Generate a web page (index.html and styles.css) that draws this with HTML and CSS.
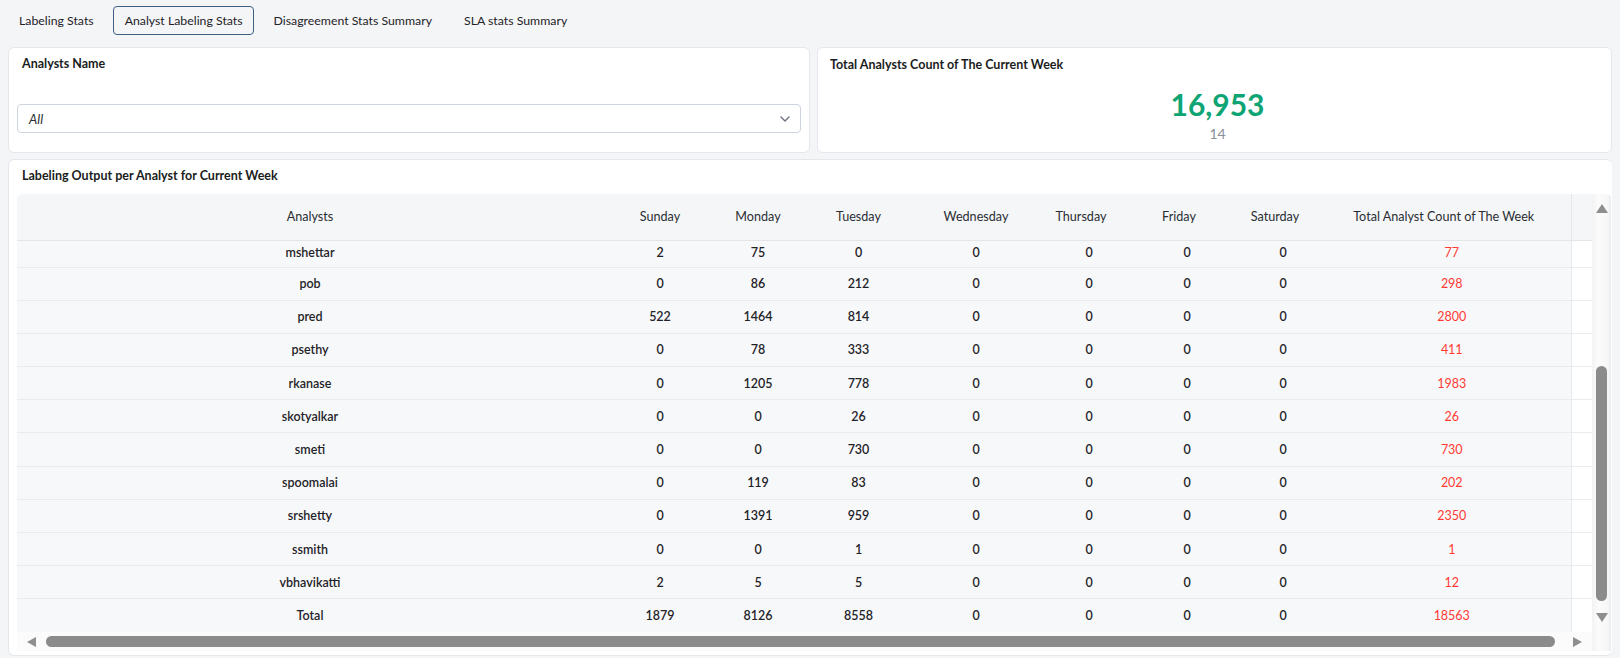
FILE: index.html
```html
<!DOCTYPE html>
<html>
<head>
<meta charset="utf-8">
<link rel="stylesheet" href="styles.css">
</head>
<body>
<nav class="tabs">
  <div class="tab">Labeling Stats</div>
  <div class="tab active">Analyst Labeling Stats</div>
  <div class="tab">Disagreement Stats Summary</div>
  <div class="tab">SLA stats Summary</div>
</nav>

<section class="top-row">
  <div class="card filter-card">
    <div class="card-title">Analysts Name</div>
    <div class="select">
      <span class="select-value">All</span>
      <svg class="chevron" width="10" height="6" viewBox="0 0 10 6"><path d="M1 1l4 4 4-4" fill="none" stroke="#6b7280" stroke-width="1.4" stroke-linecap="round" stroke-linejoin="round"/></svg>
    </div>
  </div>
  <div class="card kpi-card">
    <div class="card-title">Total Analysts Count of The Current Week</div>
    <div class="kpi">
      <div class="kpi-value">16,953</div>
      <div class="kpi-sub">14</div>
    </div>
  </div>
</section>

<section class="card table-card">
  <div class="card-title">Labeling Output per Analyst for Current Week</div>
  <div class="grid-wrap">
    <div class="grid-content">
      <table class="grid">
        <colgroup>
          <col style="width:586px"><col style="width:114px"><col style="width:82px"><col style="width:119px"><col style="width:116px"><col style="width:102px"><col style="width:94px"><col style="width:98px"><col style="width:243px"><col style="width:21px">
        </colgroup>
        <thead>
          <tr>
            <th>Analysts</th><th>Sunday</th><th>Monday</th><th>Tuesday</th><th>Wednesday</th><th class="sh">Thursday</th><th class="sh">Friday</th><th class="sh">Saturday</th><th class="sh tot">Total Analyst Count of The Week</th><th class="gutter"></th>
          </tr>
        </thead>
        <tbody>
          <tr class="clip"><td>mshettar</td><td>2</td><td>75</td><td>0</td><td>0</td><td class="s">0</td><td class="s">0</td><td class="s">0</td><td class="red">77</td><td class="gutter"></td></tr>
          <tr><td>pob</td><td>0</td><td>86</td><td>212</td><td>0</td><td class="s">0</td><td class="s">0</td><td class="s">0</td><td class="red">298</td><td class="gutter"></td></tr>
          <tr><td>pred</td><td>522</td><td>1464</td><td>814</td><td>0</td><td class="s">0</td><td class="s">0</td><td class="s">0</td><td class="red">2800</td><td class="gutter"></td></tr>
          <tr><td>psethy</td><td>0</td><td>78</td><td>333</td><td>0</td><td class="s">0</td><td class="s">0</td><td class="s">0</td><td class="red">411</td><td class="gutter"></td></tr>
          <tr><td>rkanase</td><td>0</td><td>1205</td><td>778</td><td>0</td><td class="s">0</td><td class="s">0</td><td class="s">0</td><td class="red">1983</td><td class="gutter"></td></tr>
          <tr><td>skotyalkar</td><td>0</td><td>0</td><td>26</td><td>0</td><td class="s">0</td><td class="s">0</td><td class="s">0</td><td class="red">26</td><td class="gutter"></td></tr>
          <tr><td>smeti</td><td>0</td><td>0</td><td>730</td><td>0</td><td class="s">0</td><td class="s">0</td><td class="s">0</td><td class="red">730</td><td class="gutter"></td></tr>
          <tr><td>spoomalai</td><td>0</td><td>119</td><td>83</td><td>0</td><td class="s">0</td><td class="s">0</td><td class="s">0</td><td class="red">202</td><td class="gutter"></td></tr>
          <tr><td>srshetty</td><td>0</td><td>1391</td><td>959</td><td>0</td><td class="s">0</td><td class="s">0</td><td class="s">0</td><td class="red">2350</td><td class="gutter"></td></tr>
          <tr><td>ssmith</td><td>0</td><td>0</td><td>1</td><td>0</td><td class="s">0</td><td class="s">0</td><td class="s">0</td><td class="red">1</td><td class="gutter"></td></tr>
          <tr><td>vbhavikatti</td><td>2</td><td>5</td><td>5</td><td>0</td><td class="s">0</td><td class="s">0</td><td class="s">0</td><td class="red">12</td><td class="gutter"></td></tr>
          <tr class="total"><td>Total</td><td>1879</td><td>8126</td><td>8558</td><td>0</td><td class="s">0</td><td class="s">0</td><td class="s">0</td><td class="red">18563</td><td class="gutter"></td></tr>
        </tbody>
      </table>
    </div>
    <div class="vscroll">
      <span class="arrow up"></span>
      <div class="vtrack"><div class="vthumb"></div></div>
      <span class="arrow down"></span>
    </div>
    <div class="hscroll">
      <span class="arrow left"></span>
      <div class="htrack"><div class="hthumb"></div></div>
      <span class="arrow right"></span>
    </div>
  </div>
</section>
</body>
</html>
```

FILE: styles.css
```css
* { box-sizing: border-box; }
html, body { margin: 0; padding: 0; }
body {
  background: #f4f5f7;
  font-family: "Lato", "Liberation Sans", sans-serif;
  font-size: 13px;
  color: #1f2328;
  padding: 6px 8px 0 8px;
  width: 1620px;
  height: 658px;
  overflow: hidden;
}

.tabs {
  display: flex;
  gap: 9px;
  height: 29px;
  align-items: stretch;
}
.tab {
  display: flex;
  align-items: center;
  padding: 0 11px 0 10px;
  border: 1px solid transparent;
  border-radius: 4px;
  color: #1f2328;
  white-space: nowrap;
  font-size: 12.3px;
}
.tab.active {
  border-color: #3d5f86;
  padding: 0 10px 0 11px;
}
.tab:first-child { margin-right: -2px; }

.top-row {
  display: grid;
  grid-template-columns: 802px 1fr;
  gap: 7px;
  margin-top: 12px;
  height: 106px;
}

.card {
  background: #fff;
  border: 1px solid #e4e7eb;
  border-radius: 6px;
}
.card-title {
  font-weight: 700;
  font-size: 12.5px;
  line-height: 18px;
  padding-left: 5px;
  color: #1a1d21;
}

.filter-card {
  padding: 7px 8px 0 8px;
}
.select {
  margin-top: 31px;
  height: 29px;
  border: 1px solid #cdd4de;
  border-radius: 4px;
  display: flex;
  align-items: center;
  justify-content: space-between;
  padding: 0 10px 0 11px;
}
.select-value {
  font-style: italic;
  color: #2b2f33;
}
.chevron { display: block; }

.kpi-card {
  padding: 8px 12px 0 12px;
}
.kpi-card .card-title { padding-left: 0; }
.kpi {
  display: flex;
  flex-direction: column;
  align-items: center;
  margin-top: 13px;
  padding-left: 6px;
}
.kpi-value {
  font-size: 30px;
  font-weight: 700;
  line-height: 34px;
  color: #0fa474;
}
.kpi-sub {
  font-size: 14px;
  line-height: 16px;
  color: #8a8f98;
  margin-top: 5px;
}

.table-card {
  margin-top: 6px;
  height: 497px;
  padding: 7px 0 5px 8px;
  border-right: none;
}
.table-card .card-title { line-height: 18px; }
.grid-wrap {
  margin-top: 9px;
  display: grid;
  grid-template-columns: 1575px 19px;
  grid-template-rows: 438px 19px;
  border-radius: 6px 6px 0 0;
  overflow: hidden;
}
.grid-content {
  overflow: hidden;
  background: #f7f8fa;
}
.grid {
  border-collapse: collapse;
  table-layout: fixed;
  width: 1575px;
}
.grid th {
  height: 46px;
  font-weight: 400;
  font-size: 12.6px;
  color: #2a2e33;
  background: #f5f6f8;
  border-bottom: 1px solid #e3e5e8;
  text-align: center;
  padding: 0;
  white-space: nowrap;
}
.grid th.sh { padding-right: 16px; padding-left: 8px; }
.grid th.sh.tot { padding-left: 5px; }
.grid th.gutter { border-left: 1px solid #e6e8eb; }
.grid td {
  height: 33.2px;
  text-align: center;
  padding: 0;
  font-weight: 600;
  font-size: 12.5px;
  color: #1f2328;
  border-bottom: 1px solid #e9ebee;
  white-space: nowrap;
}
.grid td.s { padding-left: 8px; }
.grid td.red { padding-left: 5px; }
.grid tr.total td { border-bottom: none; }
.grid td.gutter {
  background: #fff;
  border-left: 1px solid #e6e8eb;
}
.grid tr.clip td {
  height: 27px;
  vertical-align: top;
  padding-top: 4px;
  line-height: 16px;
}
.grid tr.clip td.s { padding-left: 8px; }
.grid tr.clip td.red { padding-left: 5px; }
.grid td.red { color: #ff3a33; font-weight: 400; }

.vscroll {
  grid-column: 2;
  grid-row: 1 / 3;
  background: linear-gradient(to right, #f3f3f3, #fbfbfb 35%, #f7f7f7 80%, #ececec);
  display: flex;
  flex-direction: column;
  align-items: center;
  padding: 10px 0 0 0;
}
.vtrack {
  flex: 1;
  width: 100%;
  display: flex;
  flex-direction: column;
  justify-content: flex-end;
  align-items: center;
  padding: 4px 0 12px 0;
}
.vthumb {
  width: 11px;
  height: 235px;
  border-radius: 6px;
  background: #8b8b8b;
}
.hscroll {
  grid-column: 1;
  grid-row: 2;
  background: #fbfbfc;
  display: flex;
  align-items: center;
  padding: 0 10px 0 10px;
}
.htrack {
  flex: 1;
  display: flex;
  align-items: center;
  padding: 0 18px 0 10px;
}
.hthumb {
  width: 100%;
  height: 11px;
  border-radius: 6px;
  background: #8b8b8b;
}
.arrow {
  display: block;
  width: 0;
  height: 0;
  flex: none;
}
.arrow.up {
  border-left: 6px solid transparent;
  border-right: 6px solid transparent;
  border-bottom: 9px solid #8e8e8e;
}
.arrow.down {
  border-left: 6px solid transparent;
  border-right: 6px solid transparent;
  border-top: 9px solid #8e8e8e;
  margin-bottom: 29px;
}
.arrow.left {
  border-top: 5.5px solid transparent;
  border-bottom: 5.5px solid transparent;
  border-right: 9px solid #8e8e8e;
}
.arrow.right {
  border-top: 5.5px solid transparent;
  border-bottom: 5.5px solid transparent;
  border-left: 9px solid #8e8e8e;
}
```
